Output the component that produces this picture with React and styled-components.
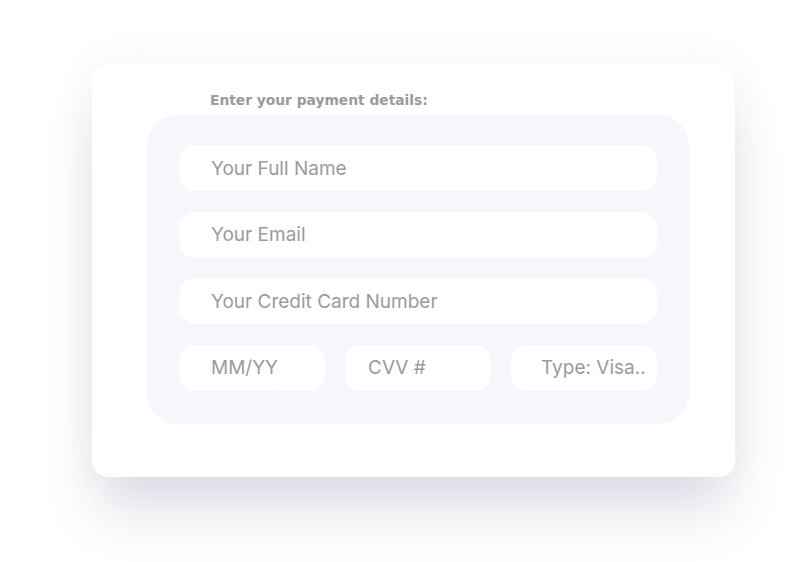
import React from "react";
import styled, { createGlobalStyle } from "styled-components";

const Global = createGlobalStyle`
  html, body { margin: 0; padding: 0; background: #ffffff; }
  body { font-family: Inter, "Noto Sans", sans-serif; }
  * { box-sizing: border-box; }
`;

const Page = styled.div`
  width: 802px;
  height: 562px;
  padding: 64px 0 0 92px;
  overflow: hidden;
`;

const Card = styled.div`
  width: 643px;
  height: 413px;
  background: #ffffff;
  border-radius: 16px;
  padding: 26px 46px 0 55px;
  box-shadow: 0 40px 55px -8px rgba(60, 60, 110, 0.17), 0 0 45px rgba(60, 60, 110, 0.05);
`;

const Label = styled.div`
  font-family: "DejaVu Sans", "Noto Sans", sans-serif;
  font-weight: 700;
  font-size: 13.8px;
  color: #9a9a9a;
  padding-left: 63px;
  height: 25px;
  line-height: 20px;
`;

const Panel = styled.div`
  width: 542px;
  height: 309px;
  background: #f7f6fd;
  border-radius: 30px;
  padding: 30px 32px 33px;
  display: flex;
  flex-direction: column;
  justify-content: space-between;
`;

const Row = styled.div`
  display: grid;
  grid-template-columns: repeat(3, 1fr);
  gap: 20px;
`;

const Field = styled.div`
  height: 46px;
  background: #ffffff;
  border-radius: 16px;
  display: flex;
  align-items: center;
  padding-left: ${(p) => p.$pad || 32}px;
  font-size: 19px;
  color: #9b9b9b;
  white-space: nowrap;
`;

export default function App() {
  return (
    <>
      <Global />
      <Page>
        <Card>
          <Label>Enter your payment details:</Label>
          <Panel>
            <Field>Your Full Name</Field>
            <Field>Your Email</Field>
            <Field>Your Credit Card Number</Field>
            <Row>
              <Field>MM/YY</Field>
              <Field $pad={23}>CVV #</Field>
              <Field $pad={30}>Type: Visa..</Field>
            </Row>
          </Panel>
        </Card>
      </Page>
    </>
  );
}
